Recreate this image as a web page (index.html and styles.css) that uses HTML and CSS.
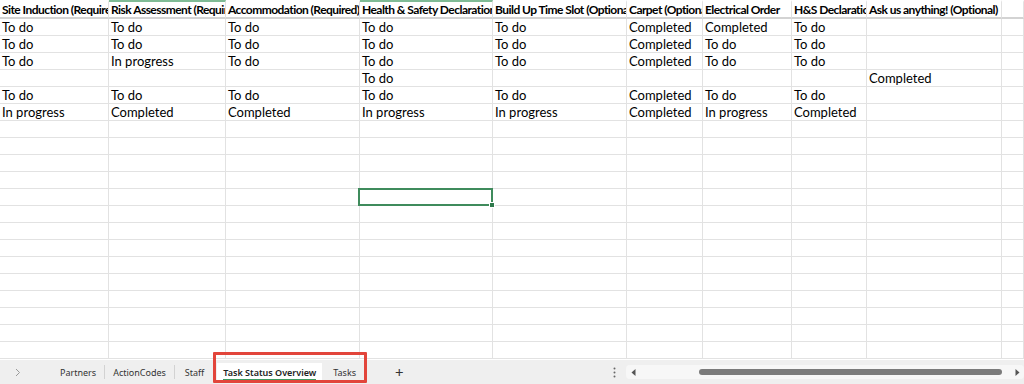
FILE: index.html
```html
<!DOCTYPE html>
<html>
<head>
<meta charset="utf-8">
<link rel="stylesheet" href="styles.css">
</head>
<body>
<div class="app">
  <div class="sheet">
    <div class="c h">Site Induction (Required)</div><div class="c h hl">Risk Assessment (Required)</div><div class="c h">Accommodation (Required)</div><div class="c h hl">Health &amp; Safety Declaration</div><div class="c h">Build Up Time Slot (Optional)</div><div class="c h">Carpet (Optional)</div><div class="c h">Electrical Order</div><div class="c h">H&amp;S Declaration</div><div class="c h">Ask us anything! (Optional)</div><div class="c h"></div>

    <div class="c">To do</div><div class="c">To do</div><div class="c">To do</div><div class="c">To do</div><div class="c">To do</div><div class="c">Completed</div><div class="c">Completed</div><div class="c">To do</div><div class="c"></div><div class="c"></div>
    <div class="c">To do</div><div class="c">To do</div><div class="c">To do</div><div class="c">To do</div><div class="c">To do</div><div class="c">Completed</div><div class="c">To do</div><div class="c">To do</div><div class="c"></div><div class="c"></div>
    <div class="c">To do</div><div class="c">In progress</div><div class="c">To do</div><div class="c">To do</div><div class="c">To do</div><div class="c">Completed</div><div class="c">To do</div><div class="c">To do</div><div class="c"></div><div class="c"></div>
    <div class="c"></div><div class="c"></div><div class="c"></div><div class="c">To do</div><div class="c"></div><div class="c"></div><div class="c"></div><div class="c"></div><div class="c">Completed</div><div class="c"></div>
    <div class="c">To do</div><div class="c">To do</div><div class="c">To do</div><div class="c">To do</div><div class="c">To do</div><div class="c">Completed</div><div class="c">To do</div><div class="c">To do</div><div class="c"></div><div class="c"></div>
    <div class="c">In progress</div><div class="c">Completed</div><div class="c">Completed</div><div class="c">In progress</div><div class="c">In progress</div><div class="c">Completed</div><div class="c">In progress</div><div class="c">Completed</div><div class="c"></div><div class="c"></div>

    <div class="c"></div><div class="c"></div><div class="c"></div><div class="c"></div><div class="c"></div><div class="c"></div><div class="c"></div><div class="c"></div><div class="c"></div><div class="c"></div>
    <div class="c"></div><div class="c"></div><div class="c"></div><div class="c"></div><div class="c"></div><div class="c"></div><div class="c"></div><div class="c"></div><div class="c"></div><div class="c"></div>
    <div class="c"></div><div class="c"></div><div class="c"></div><div class="c"></div><div class="c"></div><div class="c"></div><div class="c"></div><div class="c"></div><div class="c"></div><div class="c"></div>
    <div class="c"></div><div class="c"></div><div class="c"></div><div class="c"></div><div class="c"></div><div class="c"></div><div class="c"></div><div class="c"></div><div class="c"></div><div class="c"></div>
    <div class="c"></div><div class="c"></div><div class="c"></div><div class="c sel"></div><div class="c"></div><div class="c"></div><div class="c"></div><div class="c"></div><div class="c"></div><div class="c"></div>
    <div class="c"></div><div class="c"></div><div class="c"></div><div class="c"></div><div class="c"></div><div class="c"></div><div class="c"></div><div class="c"></div><div class="c"></div><div class="c"></div>
    <div class="c"></div><div class="c"></div><div class="c"></div><div class="c"></div><div class="c"></div><div class="c"></div><div class="c"></div><div class="c"></div><div class="c"></div><div class="c"></div>
    <div class="c"></div><div class="c"></div><div class="c"></div><div class="c"></div><div class="c"></div><div class="c"></div><div class="c"></div><div class="c"></div><div class="c"></div><div class="c"></div>
    <div class="c"></div><div class="c"></div><div class="c"></div><div class="c"></div><div class="c"></div><div class="c"></div><div class="c"></div><div class="c"></div><div class="c"></div><div class="c"></div>
    <div class="c"></div><div class="c"></div><div class="c"></div><div class="c"></div><div class="c"></div><div class="c"></div><div class="c"></div><div class="c"></div><div class="c"></div><div class="c"></div>
    <div class="c"></div><div class="c"></div><div class="c"></div><div class="c"></div><div class="c"></div><div class="c"></div><div class="c"></div><div class="c"></div><div class="c"></div><div class="c"></div>
    <div class="c"></div><div class="c"></div><div class="c"></div><div class="c"></div><div class="c"></div><div class="c"></div><div class="c"></div><div class="c"></div><div class="c"></div><div class="c"></div>
    <div class="c"></div><div class="c"></div><div class="c"></div><div class="c"></div><div class="c"></div><div class="c"></div><div class="c"></div><div class="c"></div><div class="c"></div><div class="c"></div>
    <div class="c"></div><div class="c"></div><div class="c"></div><div class="c"></div><div class="c"></div><div class="c"></div><div class="c"></div><div class="c"></div><div class="c"></div><div class="c"></div>
  </div>

  <div class="tabbar">
    <svg class="chev" width="6" height="9" viewBox="0 0 6 9"><path d="M1 1 L4.5 4.5 L1 8" fill="none" stroke="#9a9a9a" stroke-width="1"/></svg>
    <div class="tablist">
      <div class="tab">Partners</div>
      <div class="sep"></div>
      <div class="tab">ActionCodes</div>
      <div class="sep"></div>
      <div class="tab staff">Staff</div>
      <div class="tab active"><span>Task Status Overview</span></div>
      <div class="tab tasks">Tasks</div>
      <div class="plus">+</div>
    </div>
    <div class="hscroll">
      <svg class="dots" width="3" height="11" viewBox="0 0 3 11"><circle cx="1.5" cy="1.5" r="1" fill="#666"/><circle cx="1.5" cy="5.5" r="1" fill="#666"/><circle cx="1.5" cy="9.5" r="1" fill="#666"/></svg>
      <div class="track">
        <svg class="arr" width="5" height="7" viewBox="0 0 5 7"><path d="M4.5 0 L0.5 3.5 L4.5 7 Z" fill="#555"/></svg>
        <div class="thumb"></div>
        <svg class="arr" width="5" height="7" viewBox="0 0 5 7"><path d="M0.5 0 L4.5 3.5 L0.5 7 Z" fill="#555"/></svg>
      </div>
    </div>
    <div class="callout"></div>
  </div>
</div>
</body>
</html>
```

FILE: styles.css
```css
html, body {
  margin: 0;
  padding: 0;
}
body {
  width: 1024px;
  height: 384px;
  overflow: hidden;
  background: #fff;
  font-family: Lato, "Liberation Sans", sans-serif;
}
.app {
  display: flex;
  flex-direction: column;
  height: 384px;
}
.sheet {
  height: 360px;
  overflow: hidden;
  display: grid;
  grid-template-columns: 109px 117px 134px 133px 134px 76px 89px 75px 135px 1fr;
  grid-template-rows: 19px;
  grid-auto-rows: 17px;
}
.c {
  box-sizing: border-box;
  border-right: 1px solid #e2e2e2;
  border-bottom: 1px solid #e2e2e2;
  padding: 0 2px;
  font-size: 13px;
  line-height: 17px;
  white-space: nowrap;
  overflow: hidden;
  color: #000;
}
.h {
  font-weight: bold;
  font-size: 12px;
  letter-spacing: -0.55px;
  border-top: 2px solid transparent;
  border-bottom: 2px solid #d3d3d3;
  line-height: 16px;
}
.h.hl {
  border-top-color: #7fbb95;
}
.sel {
  position: relative;
  overflow: visible;
}
.sel::before {
  content: "";
  position: absolute;
  left: -2px;
  top: -1px;
  right: -1px;
  bottom: -1px;
  border: 2px solid #3f8b5c;
}
.sel::after {
  content: "";
  position: absolute;
  right: -3px;
  bottom: -3px;
  width: 4px;
  height: 4px;
  background: #2e7a4c;
  border: 1px solid #fff;
}

.tabbar {
  position: relative;
  height: 24px;
  background: #efefef;
  display: flex;
  align-items: center;
  font-family: "Noto Sans", "Liberation Sans", sans-serif;
  font-size: 9px;
  color: #333;
}
.chev {
  margin-left: 15px;
}
.tablist {
  display: flex;
  align-items: center;
  height: 24px;
  margin-left: 31px;
}
.tab {
  padding: 0 8px;
  white-space: nowrap;
}
.tab.staff {
  padding: 0 9px 0 10px;
}
.sep {
  width: 1px;
  height: 14px;
  background: #d2d2d2;
}
.tab.active {
  margin-left: 4px;
  background: #fff;
  height: 19px;
  display: flex;
  align-items: center;
  padding: 0 6px;
  font-weight: 600;
  color: #222;
}
.tab.active span {
  border-bottom: 2px solid #3d9a5f;
  line-height: 13px;
  padding-top: 2px;
}
.tab.tasks {
  padding: 0 8px 0 11px;
}
.plus {
  margin-left: 31px;
  font-size: 15px;
  color: #333;
}
.hscroll {
  margin-left: auto;
  display: flex;
  align-items: center;
  height: 24px;
}
.dots {
  margin-right: 10px;
}
.track {
  width: 398px;
  height: 14px;
  background: #f7f7f7;
  border-radius: 4px;
  display: flex;
  align-items: center;
  padding: 0 4px 0 5px;
  box-sizing: border-box;
}
.thumb {
  width: 303px;
  height: 6px;
  border-radius: 3px;
  background: #7b7b7b;
  margin-left: 63px;
  margin-right: 13px;
}
.callout {
  position: absolute;
  left: 213px;
  top: -8px;
  width: 154px;
  height: 31px;
  box-sizing: border-box;
  border: 3px solid #e2453b;
  border-radius: 1px;
}
```
